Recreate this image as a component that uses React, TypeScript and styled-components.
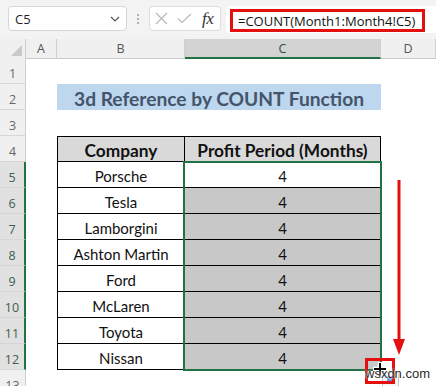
import React from 'react';
import styled, { createGlobalStyle } from 'styled-components';

const green = '#217346';
const red = '#e3100f';

const GlobalStyle = createGlobalStyle`
  html, body {
    margin: 0;
    padding: 0;
    background: #fff;
  }
`;

const companies = ['Porsche', 'Tesla', 'Lamborgini', 'Ashton Martin', 'Ford', 'McLaren', 'Toyota', 'Nissan'];

const Window = styled.div`
  position: relative;
  width: 436px;
  height: 386px;
  overflow: hidden;
  background: #f3f3f3;
  display: flex;
  flex-direction: column;
`;

const FormulaBar = styled.div`
  height: 39px;
  flex-shrink: 0;
  box-sizing: border-box;
  display: flex;
  align-items: flex-start;
  padding: 6px 0 0 8px;
`;

const NameBox = styled.div`
  width: 119px;
  height: 25px;
  box-sizing: border-box;
  background: #fff;
  border: 1px solid #d6d6d6;
  border-radius: 4px;
  display: flex;
  align-items: center;
  justify-content: space-between;
  padding: 0 6px 0 6px;
  font: 13px "Open Sans", sans-serif;
  color: #1f1f1f;
`;

const Grip = styled.div`
  width: 22px;
  height: 25px;
  display: flex;
  flex-direction: column;
  align-items: center;
  justify-content: center;
  gap: 2px;

  span {
    width: 2px;
    height: 2px;
    border-radius: 1px;
    background: #9a9a9a;
  }
`;

const FxButtons = styled.div`
  width: 72px;
  height: 25px;
  box-sizing: border-box;
  background: #fff;
  border: 1px solid #dcdcdc;
  border-radius: 4px;
  display: flex;
  align-items: center;
  padding-left: 5px;
  gap: 9px;
`;

const FxLabel = styled.span`
  font: italic 17px "Liberation Serif", serif;
  color: #333;
  letter-spacing: -0.5px;
  margin-left: 1px;
`;

const FormulaInput = styled.div`
  flex: 1;
  height: 27px;
  margin-left: 5px;
  box-sizing: border-box;
  background: #fff;
  border-radius: 4px 0 0 4px;
  padding: 3px 0 0 4px;
`;

const Highlight = styled.div`
  width: 195px;
  height: 23px;
  box-sizing: border-box;
  border: 3px solid ${red};
  display: flex;
  align-items: center;
  padding-left: 5px;
  font: 13px "Open Sans", sans-serif;
  color: #111;
  white-space: nowrap;
`;

const Sheet = styled.div`
  flex: 1;
  background: #fff;
  display: flex;
  flex-direction: column;
`;

const SheetRow = styled.div<{ $height?: number }>`
  display: grid;
  grid-template-columns: 26px 31px 128px 196px 1fr;
  height: ${p => p.$height ?? 26}px;
  flex-shrink: 0;
`;

const Corner = styled.div`
  background: #f0f0f0;
  border-right: 1px solid #d0d0d0;
  border-bottom: 1px solid #c8c8c8;
  box-sizing: border-box;
  display: flex;
  align-items: flex-end;
  justify-content: flex-end;
  padding: 0 3px 2px 0;
`;

const ColHeader = styled.div<{ $selected?: boolean }>`
  box-sizing: border-box;
  display: flex;
  align-items: center;
  justify-content: center;
  font: 12.5px "Open Sans", sans-serif;
  color: ${p => (p.$selected ? '#2f4f3c' : '#555')};
  background: ${p => (p.$selected ? '#d3d3d3' : '#f0f0f0')};
  border-right: 1px solid #d0d0d0;
  border-bottom: ${p => (p.$selected ? `2px solid ${green}` : '1px solid #c8c8c8')};
  padding-top: ${p => (p.$selected ? '1px' : '0')};
`;

const RowHeader = styled.div<{ $selected?: boolean }>`
  box-sizing: border-box;
  display: flex;
  align-items: center;
  justify-content: center;
  padding-top: 6px;
  font: 12.5px "Open Sans", sans-serif;
  color: ${p => (p.$selected ? '#3d5f4a' : '#666')};
  background: ${p => (p.$selected ? '#e1e1e1' : '#f0f0f0')};
  border-bottom: 1px solid #d6d6d6;
  border-right: ${p => (p.$selected ? `2px solid ${green}` : '1px solid #cfcfcf')};
`;

const Blank = styled.div``;

const TitleCell = styled.div`
  grid-column: 3 / 5;
  background: #bdd7ee;
  display: flex;
  align-items: center;
  justify-content: center;
  padding-top: 3px;
  font: 700 19.2px Lato, "Liberation Sans", sans-serif;
  color: #44546a;
`;

const TableCell = styled.div<{ $head?: boolean; $shade?: boolean; $left?: boolean }>`
  box-sizing: border-box;
  display: flex;
  align-items: center;
  justify-content: center;
  padding-top: 2px;
  font: ${p => (p.$head ? '700 17.3px' : '400 15px')} Lato, "Liberation Sans", sans-serif;
  color: #111;
  background: ${p => (p.$head ? '#d9d9d9' : p.$shade ? '#c8c8c8' : '#fff')};
  border-right: 1px solid #000;
  border-bottom: 1px solid #000;
  border-left: ${p => (p.$left ? '1px solid #000' : 'none')};
  border-top: ${p => (p.$head ? '1px solid #000' : 'none')};
`;

const Selection = styled.div`
  position: absolute;
  left: 183px;
  top: 161px;
  width: 199px;
  height: 210px;
  box-sizing: border-box;
  border: 2px solid ${green};
  pointer-events: none;
`;

const FillHandle = styled.div`
  position: absolute;
  left: 378px;
  top: 368px;
  width: 5px;
  height: 5px;
  background: ${green};
  border: 1px solid #fff;
`;

const Arrow = styled.svg`
  position: absolute;
  left: 392px;
  top: 178px;
`;

const RedBox = styled.div`
  position: absolute;
  left: 365px;
  top: 358px;
  width: 30px;
  height: 26px;
  box-sizing: border-box;
  border: 3px solid ${red};
`;

const AutoFillIcon = styled.div`
  position: absolute;
  left: 382px;
  top: 372px;
  width: 17px;
  height: 16px;
  box-sizing: border-box;
  border: 1px solid #c4c4c4;
  background: #f6f6f6;

  &::after {
    content: '';
    position: absolute;
    left: 4px;
    top: 3px;
    width: 5px;
    height: 5px;
    background: #6f9bd8;
  }
`;

const Cursor = styled.svg`
  position: absolute;
  left: 372px;
  top: 361px;
`;

const Watermark = styled.span`
  position: absolute;
  left: 365px;
  top: 366px;
  font: 13px "Liberation Sans", sans-serif;
  color: #2b2b2b;
  text-shadow: 0 0 2px #fff, 0 0 2px #fff;
`;

const Chevron = () => (
  <svg width="10" height="6" viewBox="0 0 10 6">
    <path d="M1 1 L5 5 L9 1" fill="none" stroke="#555" strokeWidth="1.2" />
  </svg>
);

const CrossIcon = () => (
  <svg width="13" height="13" viewBox="0 0 13 13">
    <path d="M1 1 L12 12 M12 1 L1 12" stroke="#b8b8b8" strokeWidth="1.2" />
  </svg>
);

const CheckIcon = () => (
  <svg width="15" height="11" viewBox="0 0 15 11">
    <path d="M1 5.5 L5 9.5 L14 1" fill="none" stroke="#b8b8b8" strokeWidth="1.2" />
  </svg>
);

const header = ['A', 'B', 'C', 'D'];

export default function App() {
  return (
    <Window>
      <GlobalStyle />
      <FormulaBar>
        <NameBox>
          <span>C5</span>
          <Chevron />
        </NameBox>
        <Grip>
          <span />
          <span />
          <span />
        </Grip>
        <FxButtons>
          <CrossIcon />
          <CheckIcon />
          <FxLabel>fx</FxLabel>
        </FxButtons>
        <FormulaInput>
          <Highlight>=COUNT(Month1:Month4!C5)</Highlight>
        </FormulaInput>
      </FormulaBar>

      <Sheet>
        <SheetRow $height={19}>
          <Corner>
            <svg width="11" height="11" viewBox="0 0 11 11">
              <path d="M11 0 L11 11 L0 11 Z" fill="#c9c9c9" />
            </svg>
          </Corner>
          {header.map(h => (
            <ColHeader key={h} $selected={h === 'C'}>
              {h}
            </ColHeader>
          ))}
        </SheetRow>

        <SheetRow>
          <RowHeader>1</RowHeader>
          <Blank /><Blank /><Blank /><Blank />
        </SheetRow>

        <SheetRow>
          <RowHeader>2</RowHeader>
          <Blank />
          <TitleCell>3d Reference by COUNT Function</TitleCell>
          <Blank />
        </SheetRow>

        <SheetRow>
          <RowHeader>3</RowHeader>
          <Blank /><Blank /><Blank /><Blank />
        </SheetRow>

        <SheetRow>
          <RowHeader>4</RowHeader>
          <Blank />
          <TableCell $head $left>Company</TableCell>
          <TableCell $head>Profit Period (Months)</TableCell>
          <Blank />
        </SheetRow>

        {companies.map((name, i) => (
          <SheetRow key={name}>
            <RowHeader $selected>{i + 5}</RowHeader>
            <Blank />
            <TableCell $left>{name}</TableCell>
            <TableCell $shade={i > 0}>4</TableCell>
            <Blank />
          </SheetRow>
        ))}

        <SheetRow>
          <RowHeader>13</RowHeader>
          <Blank /><Blank /><Blank /><Blank />
        </SheetRow>
      </Sheet>

      <Selection />
      <FillHandle />
      <Arrow width="14" height="180" viewBox="0 0 14 180">
        <path d="M7 2 L7 164" stroke={red} strokeWidth="3" />
        <path d="M1 161 L13 161 L7 177 Z" fill={red} />
      </Arrow>
      <AutoFillIcon />
      <RedBox />
      <Cursor width="16" height="16" viewBox="0 0 16 16">
        <path d="M8 1 V15 M1 8 H15" stroke="#fff" strokeWidth="4.5" />
        <path d="M8 2 V14 M2 8 H14" stroke="#000" strokeWidth="2" />
      </Cursor>
      <Watermark>wsxdn.com</Watermark>
    </Window>
  );
}
